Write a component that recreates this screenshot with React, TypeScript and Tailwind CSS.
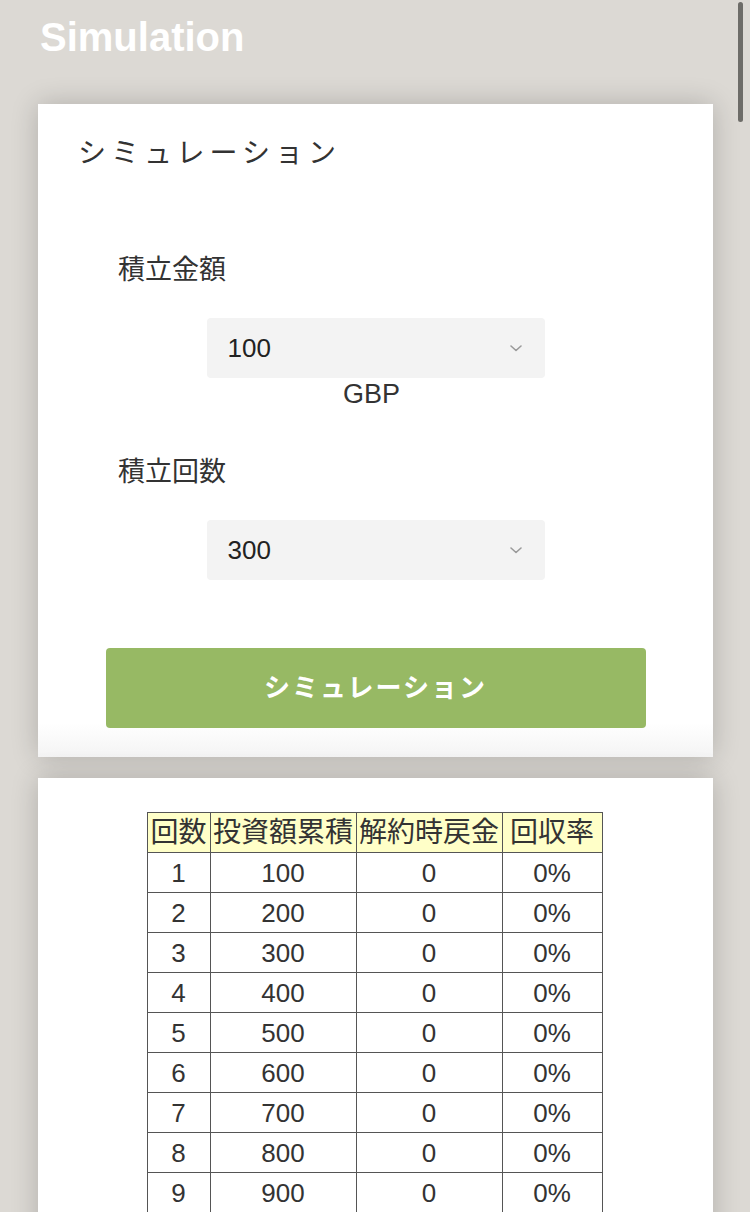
import React from "react";

const font = { fontFamily: '"Liberation Sans", "Noto Sans CJK JP", sans-serif' };

function Chevron() {
  return (
    <svg width="14" height="10" viewBox="0 0 14 10" className="text-[#9a9a9a]">
      <polyline points="2,3 7,7.5 12,3" fill="none" stroke="currentColor" strokeWidth="1.6" strokeLinecap="round" strokeLinejoin="round" />
    </svg>
  );
}

function SelectBox({ value }: { value: string }) {
  return (
    <div className="mx-auto flex h-[60px] w-[338px] items-center justify-between rounded-[4px] bg-[#f3f3f3] pl-[21px] pr-[22px]">
      <span className="text-[26px] leading-none text-[#222]">{value}</span>
      <Chevron />
    </div>
  );
}

export default function App() {
  const rows = Array.from({ length: 9 }, (_, i) => i + 1);
  return (
    <div className="relative h-[1212px] overflow-hidden bg-[#dcd9d4] text-[#333]" style={font}>
      <div className="pl-[40px] pt-[14px]">
        <h1 className="text-[40px] font-bold leading-[46px] text-white">Simulation</h1>
      </div>

      <div className="ml-[38px] mt-[44px] w-[675px] bg-[linear-gradient(to_bottom,#ffffff_calc(100%-34px),#f4f4f4)] pb-[29px] shadow-[0_0_26px_rgba(0,0,0,0.2)]">
        <h2 className="pl-[40px] pt-[30px] text-[28px] leading-[40px] tracking-[5px] text-[#333]">シミュレーション</h2>

        <div className="mt-[78px] pl-[80px] text-[27px] leading-[36px] text-[#333]">積立金額</div>
        <div className="mt-[30px]">
          <SelectBox value="100" />
        </div>
        <div className="pr-[8px] text-center text-[27px] leading-[32px] text-[#333]">GBP</div>

        <div className="mt-[44px] pl-[80px] text-[27px] leading-[36px] text-[#333]">積立回数</div>
        <div className="mt-[30px]">
          <SelectBox value="300" />
        </div>

        <button className="mx-auto mt-[68px] flex h-[80px] w-[540px] items-center justify-center rounded-[4px] bg-[#97b964] text-[26px] font-bold tracking-[2px] text-white">
          シミュレーション
        </button>
      </div>

      <div className="ml-[38px] mt-[21px] w-[675px] bg-white pt-[34px] pb-[40px] pr-[2px] shadow-[0_0_26px_rgba(0,0,0,0.2)]">
        <table className="mx-auto border-collapse border border-[#555] text-center text-[#333]">
          <thead>
            <tr className="h-[40px] bg-[#ffffc8]">
              <th className="w-[63px] border border-[#555] p-0 text-[28px] font-normal leading-[38px]">回数</th>
              <th className="w-[146px] border border-[#555] p-0 text-[28px] font-normal leading-[38px]">投資額累積</th>
              <th className="w-[146px] border border-[#555] p-0 text-[28px] font-normal leading-[38px]">解約時戻金</th>
              <th className="w-[100px] border border-[#555] p-0 text-[28px] font-normal leading-[38px]">回収率</th>
            </tr>
          </thead>
          <tbody>
            {rows.map((n) => (
              <tr key={n} className="h-[40px]">
                <td className="border border-[#555] p-0 text-[26px] leading-[38px]">{n}</td>
                <td className="border border-[#555] p-0 text-[26px] leading-[38px]">{n * 100}</td>
                <td className="border border-[#555] p-0 text-[26px] leading-[38px]">0</td>
                <td className="border border-[#555] p-0 text-[26px] leading-[38px]">0%</td>
              </tr>
            ))}
          </tbody>
        </table>
      </div>

      <div className="absolute right-[7px] top-[2px] h-[120px] w-[5px] rounded-full bg-[#6d6c68]" />
    </div>
  );
}
